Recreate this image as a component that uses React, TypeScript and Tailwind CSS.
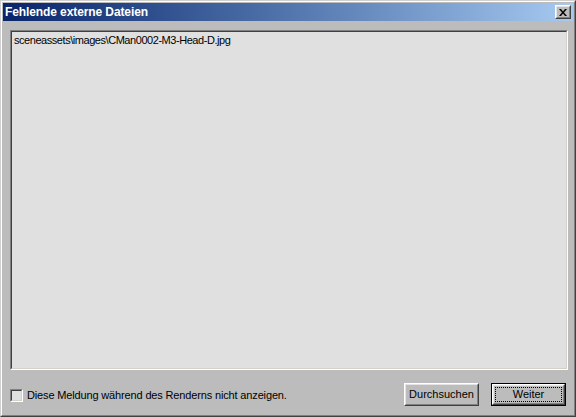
import React from "react";

const font = { fontFamily: '"Liberation Sans", Arial, sans-serif' };

function Raised({ children, className = "" }: { children: React.ReactNode; className?: string }) {
  return (
    <div className={`border border-t-white border-l-white border-r-[#404040] border-b-[#404040] ${className}`}>
      <div className="h-full w-full border border-t-[#e4e4e4] border-l-[#e4e4e4] border-r-[#808080] border-b-[#808080] flex items-center justify-center">
        {children}
      </div>
    </div>
  );
}

export default function App() {
  return (
    <div className="w-[576px] h-[417px] bg-[#bcbcbc] text-[11px] text-black" style={font}>
      <div className="h-full border border-t-[#d0d0d0] border-l-[#d0d0d0] border-r-[#404040] border-b-[#404040]">
        <div className="h-full border border-t-white border-l-white border-r-[#808080] border-b-[#808080] p-px flex flex-col">
          {/* title bar */}
          <div className="h-[18px] flex items-center justify-between pl-[2px] pr-[2px] bg-linear-to-r from-[#0a246a] to-[#a6caf0]">
            <span className="text-white font-bold text-[12px] leading-none tracking-[-0.1px]">Fehlende externe Dateien</span>
            <Raised className="w-[16px] h-[14px] bg-[#bcbcbc]">
              <svg width="8" height="7" viewBox="0 0 8 7">
                <path d="M0 0h2l2 2.5L6 0h2L5 3.5 8 7H6L4 4.5 2 7H0l3-3.5z" fill="#000" />
              </svg>
            </Raised>
          </div>

          {/* body */}
          <div className="flex-1 flex flex-col pl-[7px] pr-[5px] pt-[9px]">
            <div className="h-[340px] border border-t-[#808080] border-l-[#808080] border-r-white border-b-white">
              <div className="h-full border border-t-[#404040] border-l-[#404040] border-r-[#d4d0c8] border-b-[#d4d0c8] bg-[#e0e0e0] pl-[2px] pt-[2px]">
                <div className="leading-[13px] tracking-[-0.45px]">sceneassets\images\CMan0002-M3-Head-D.jpg</div>
              </div>
            </div>

            <div className="mt-[13px] h-[23px] flex items-center">
              <label className="flex items-center gap-[4px] pt-[1px]">
                <span className="w-[13px] h-[13px] border border-t-[#808080] border-l-[#808080] border-r-white border-b-white">
                  <span className="block h-full border border-t-[#404040] border-l-[#404040] border-r-[#d4d0c8] border-b-[#d4d0c8] bg-[#e0e0e0]" />
                </span>
                <span className="tracking-[-0.15px]">Diese Meldung während des Renderns nicht anzeigen.</span>
              </label>
              <div className="ml-auto flex gap-[12px] pr-[2px]">
                <Raised className="w-[75px] h-[23px] bg-[#bcbcbc]">
                  <span>Durchsuchen</span>
                </Raised>
                <div className="w-[75px] h-[23px] border border-black">
                  <div className="h-full border border-t-white border-l-white border-r-[#404040] border-b-[#404040]">
                    <div className="h-full border border-t-[#e4e4e4] border-l-[#e4e4e4] border-r-[#808080] border-b-[#808080] p-[1px]">
                      <div className="h-full border border-dotted border-black flex items-center justify-center">
                        <span>Weiter</span>
                      </div>
                    </div>
                  </div>
                </div>
              </div>
            </div>
          </div>
        </div>
      </div>
    </div>
  );
}
